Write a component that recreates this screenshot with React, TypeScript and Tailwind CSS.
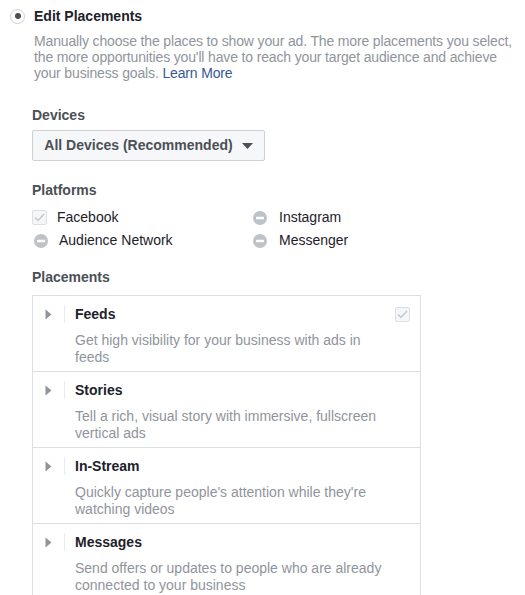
import React from "react";

const Minus = () => (
  <svg width="14" height="14" viewBox="0 0 14 14" className="shrink-0">
    <circle cx="7" cy="7" r="7" fill="#bec2c9" />
    <rect x="3" y="5.8" width="8" height="2.4" rx="0.5" fill="#ffffff" />
  </svg>
);

const CheckBox = () => (
  <div className="w-[15px] h-[15px] border border-[#dddfe2] bg-[#f5f6f7] rounded-[2px] flex items-center justify-center shrink-0">
    <svg width="11" height="9" viewBox="0 0 11 9">
      <path d="M1 4.5 L4 7.5 L10 1" fill="none" stroke="#c4c7cc" strokeWidth="1.4" />
    </svg>
  </div>
);

const Triangle = () => (
  <svg width="7" height="11" viewBox="0 0 7 11" className="shrink-0">
    <path d="M0.5 0.5 L6.5 5.5 L0.5 10.5 Z" fill="#90949c" />
  </svg>
);

const placements = [
  { title: "Feeds", desc: "Get high visibility for your business with ads in feeds", check: true },
  { title: "Stories", desc: "Tell a rich, visual story with immersive, fullscreen vertical ads" },
  { title: "In-Stream", desc: "Quickly capture people's attention while they're watching videos" },
  { title: "Messages", desc: "Send offers or updates to people who are already connected to your business" },
];

export default function App() {
  return (
    <div
      className="w-[525px] h-[595px] overflow-hidden bg-white text-[14px] text-[#4b4f56]"
      style={{ fontFamily: '"Liberation Sans", Arial, sans-serif' }}
    >
      <div className="flex items-center pl-[10px] pt-[8px]">
        <div className="w-[15px] h-[15px] rounded-full border border-[#ccd0d5] bg-white flex items-center justify-center">
          <div className="w-[6px] h-[6px] rounded-full bg-[#4b4f56]" />
        </div>
        <div className="ml-[9px] font-bold text-[#1d2129] leading-[16px]">Edit Placements</div>
      </div>
      <div className="pl-[34px] pr-0 mt-[9px] text-[#90949c] leading-[16px] tracking-[-0.15px]">
        Manually choose the places to show your ad. The more placements you select, the more opportunities you'll
        have to reach your target audience and achieve your business goals.{" "}
        <span className="text-[#365899]">Learn More</span>
      </div>

      <div className="pl-[32px]">
        <div className="mt-[26px] font-bold leading-[16px]">Devices</div>
        <div className="mt-[7px] w-[233px] h-[31px] border border-[#ced0d4] bg-[#f6f7f9] rounded-[2px] flex items-center justify-center gap-[9px] font-bold">
          <span>All Devices (Recommended)</span>
          <svg width="11" height="6" viewBox="0 0 11 6">
            <path d="M0 0 L11 0 L5.5 6 Z" fill="#4b4f56" />
          </svg>
        </div>

        <div className="mt-[21px] font-bold leading-[16px]">Platforms</div>
        <div className="mt-[12px] grid grid-cols-[221px_1fr] gap-y-[8px] text-[#1d2129]">
          <div className="flex items-center h-[15px]">
            <CheckBox />
            <span className="ml-[10px]">Facebook</span>
          </div>
          <div className="flex items-center h-[15px]">
            <Minus />
            <span className="ml-[12px]">Instagram</span>
          </div>
          <div className="flex items-center h-[15px] pl-[2px]">
            <Minus />
            <span className="ml-[11px]">Audience Network</span>
          </div>
          <div className="flex items-center h-[15px]">
            <Minus />
            <span className="ml-[12px]">Messenger</span>
          </div>
        </div>

        <div className="mt-[21px] font-bold leading-[16px]">Placements</div>
        <div className="mt-[10px] w-[389px] border border-[#dddfe2] border-b-0">
          {placements.map((p, i) => (
            <div key={p.title} className={i > 0 ? "border-t border-[#dddfe2]" : ""}>
              <div className="h-[75px] pt-[9px] pl-[12px] pr-[10px]">
                <div className="flex items-center h-[18px]">
                  <Triangle />
                  <div className="ml-[12px] w-px h-[18px] bg-[#e9ebee]" />
                  <div className="ml-[10px] font-bold text-[#1d2129] flex-1">{p.title}</div>
                  {p.check && <CheckBox />}
                </div>
                <div className="mt-[9px] pl-[30px] pr-[20px] text-[#90949c] leading-[17px]">{p.desc}</div>
              </div>
            </div>
          ))}
        </div>
      </div>
    </div>
  );
}
